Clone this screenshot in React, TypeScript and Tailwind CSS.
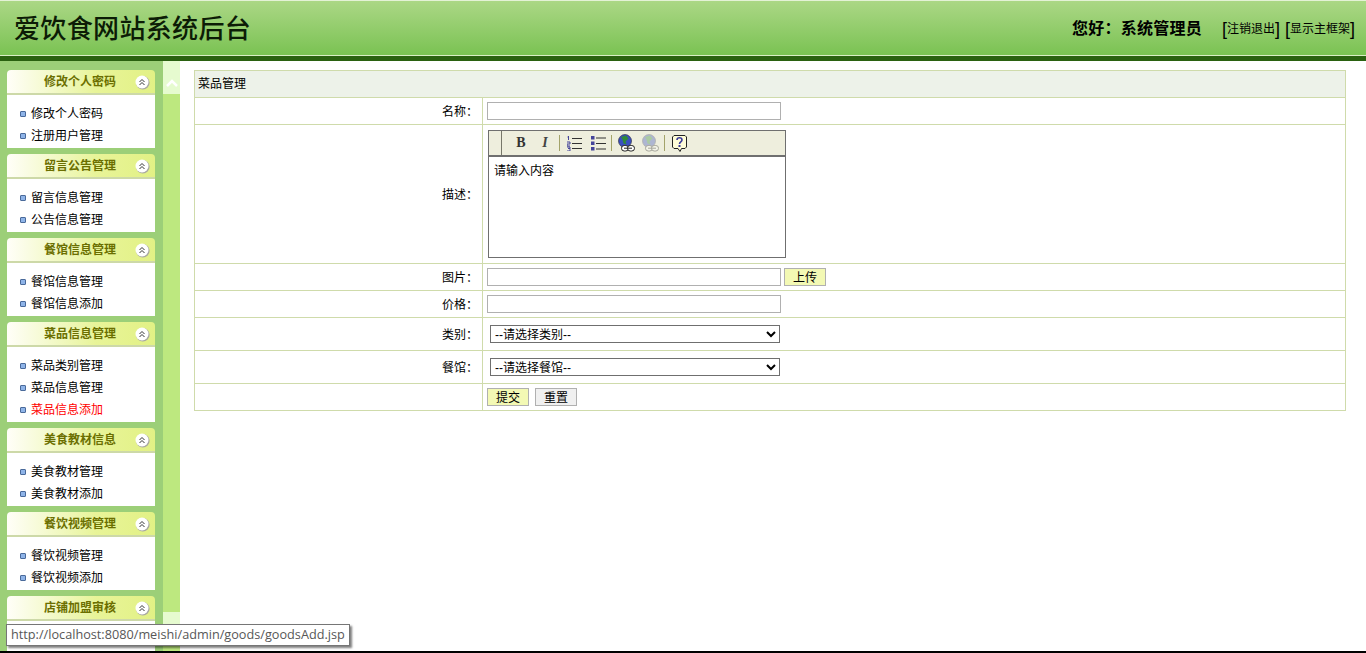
const cjk = "font-['Liberation_Sans','Noto_Sans_CJK_SC',sans-serif]";

const menus = [
  { title: "修改个人密码", items: ["修改个人密码", "注册用户管理"] },
  { title: "留言公告管理", items: ["留言信息管理", "公告信息管理"] },
  { title: "餐馆信息管理", items: ["餐馆信息管理", "餐馆信息添加"] },
  { title: "菜品信息管理", items: ["菜品类别管理", "菜品信息管理", "菜品信息添加"] },
  { title: "美食教材信息", items: ["美食教材管理", "美食教材添加"] },
  { title: "餐饮视频管理", items: ["餐饮视频管理", "餐饮视频添加"] },
  { title: "店铺加盟审核", items: [] },
];

function CollapseIcon() {
  return (
    <svg width="15" height="15" viewBox="0 0 15 15" className="mt-[1px] mr-[5px] shrink-0">
      <circle cx="7.8" cy="7.8" r="6.8" fill="#a8a8a0" />
      <circle cx="7" cy="7" r="6.5" fill="#ffffff" />
      <path d="M4.5 7 7 4.5 9.5 7M4.5 10 7 7.5 9.5 10" fill="none" stroke="#333" strokeWidth="1" />
    </svg>
  );
}

function MenuGroup({ title, items }: { title: string; items: string[] }) {
  return (
    <div className="mb-[6px] w-[148px] shrink-0">
      <div className="flex h-[25px] items-center rounded-t-[4px] border-b-2 border-[#cdd9a8] bg-gradient-to-r from-[#fffef8] via-[#e8f498] via-60% to-[#e2f185]">
        <span className="flex-1 pl-[37px] text-[12px] font-bold text-[#6b6f00]">{title}</span>
        <CollapseIcon />
      </div>
      <ul className="min-h-[53px] bg-white pt-[8px] pb-[1px]">
        {items.map((item) => (
          <li key={item} className="flex h-[22px] items-center pl-[13px]">
            <span className="mr-[5px] h-[6px] w-[6px] rounded-[1px] border border-[#4a6a9a] bg-[#8fb4e8]" />
            <span className={item === "菜品信息添加" ? "text-[#ff0000]" : "text-black"}>{item}</span>
          </li>
        ))}
      </ul>
    </div>
  );
}

function ToolBtn({ children }: { children: React.ReactNode }) {
  return <span className="flex h-full w-[24px] items-center justify-center">{children}</span>;
}

function Sep({ className }: { className: string }) {
  return <span className={`h-[16px] w-px bg-[#a3a36a] ${className}`} />;
}

function LinkGlobe() {
  return (
    <svg width="17" height="18" viewBox="0 0 17 18">
      <circle cx="7" cy="7" r="6.5" fill="#3a4fc0" stroke="#223" strokeWidth="0.6" />
      <path d="M3 3 8 1.5l2.5 3-3 3 1 3-3-1-1-4z" fill="#2f8a3a" />
      <rect x="3.5" y="11.5" width="7" height="5.5" rx="2.7" fill="#fff" stroke="#222" />
      <rect x="9.5" y="11.5" width="7" height="5.5" rx="2.7" fill="#fff" stroke="#222" />
      <path d="M6 14.2h8" stroke="#222" />
    </svg>
  );
}

function Toolbar() {
  return (
    <div className="flex h-[26px] items-center border-b-2 border-[#6f6f6f] bg-[#eeeedd]">
      <span className="mr-[7px] h-full w-[13px] border-r border-[#77776a]" />
      <ToolBtn>
        <span className="font-['Liberation_Serif',serif] text-[14px] leading-none font-bold text-[#333]">B</span>
      </ToolBtn>
      <ToolBtn>
        <span className="font-['Liberation_Serif',serif] text-[14px] leading-none font-bold text-[#444] italic">I</span>
      </ToolBtn>
      <Sep className="mr-[2px] ml-[2px]" />
      <ToolBtn>
        <svg width="15" height="15" viewBox="0 0 15 15">
          <path d="M1.5 0v4M.5 1h1M0 6h3v2H0v2h3M0 11h3v1.5H1M3 12.500V15H0" fill="none" stroke="#44449a" />
          <path d="M5 2.500h10M5 7.500h10M5 12.500h10" stroke="#333" />
        </svg>
      </ToolBtn>
      <ToolBtn>
        <svg width="15" height="15" viewBox="0 0 15 15">
          <path d="M0 0h3.500v3.500H0zM0 5.500h3.500V9H0zM0 11h3.500v3.500H0z" fill="#44449a" />
          <path d="M5 2h10M5 7.500h10M5 13h10" stroke="#333" />
        </svg>
      </ToolBtn>
      <Sep className="mr-[2px] ml-[1px]" />
      <ToolBtn>
        <LinkGlobe />
      </ToolBtn>
      <ToolBtn>
        <span className="flex opacity-35">
          <LinkGlobe />
        </span>
      </ToolBtn>
      <Sep className="mr-[2px] ml-[2px]" />
      <ToolBtn>
        <svg width="15" height="17" viewBox="0 0 15 17">
          <path d="M2 .5h11l1.500 1.500v10L13 13.500H9.500L8 16.500l-2-3H2L.5 12V2z" fill="#fffdd8" stroke="#222" />
          <path d="M5 5c0-3 5-3 5 0 0 2-2.500 1.800-2.500 4" fill="none" stroke="#3a3a9a" strokeWidth="1.600" />
          <path d="M6.500 10h2v2h-2z" fill="#3a3a9a" />
        </svg>
      </ToolBtn>
    </div>
  );
}

const inputCls = "block h-[18px] w-[294px] border border-[#b0b0b0] bg-white";
const tdLabel = "border border-[#cfdbab] pt-[1px] pr-[4px] text-right align-middle";
const tdValue = "border border-[#cfdbab] pl-[4px] align-middle";

function FormRow({ label, h, children }: { label: string; h: string; children: React.ReactNode }) {
  return (
    <tr className={h}>
      <td className={tdLabel}>{label}：</td>
      <td className={tdValue}>{children}</td>
    </tr>
  );
}

export default function App() {
  return (
    <div className={`relative flex h-[653px] flex-col overflow-hidden bg-white text-[12px] text-black ${cjk}`}>
      <header className="flex h-[61px] shrink-0 items-center justify-between border-t border-b-[5px] border-t-[#e4f2d6] border-b-[#2a6110] bg-gradient-to-b from-[#abd785] to-[#79c251] shadow-[inset_0_-1px_0_#d8eec4]">
        <h1 className="pl-[14px] text-[26px] leading-none font-medium tracking-[0.35px] text-[#0c1c06]">爱饮食网站系统后台</h1>
        <div className="flex items-center pr-[11px]">
          <span className="mr-[20px] text-[16px] font-bold tracking-[0.25px]">您好：系统管理员</span>
          <span className="flex items-center gap-[5px]">
            <span className="flex items-center"><span className="text-[18px] leading-none">[</span>注销退出<span className="text-[18px] leading-none">]</span></span>
            <span className="flex items-center"><span className="text-[18px] leading-none">[</span>显示主框架<span className="text-[18px] leading-none">]</span></span>
          </span>
        </div>
      </header>

      <div className="flex min-h-0 flex-1">
        <aside className="flex w-[163px] shrink-0 flex-col overflow-hidden bg-[#9ccf78] pt-[9px] pl-[7px]">
          {menus.map((m) => (
            <MenuGroup key={m.title} title={m.title} items={m.items} />
          ))}
        </aside>
        <div className="flex w-[17px] shrink-0 flex-col justify-between bg-[#bde87f]">
          <div className="flex h-[33px] items-center justify-center bg-[#e6fbcf] pt-[10px]">
            <svg width="12" height="8" viewBox="0 0 12 8"><path d="M1 7 6 2l5 5" fill="none" stroke="#fff" strokeWidth="2.500" /></svg>
          </div>
          <div className="mb-[19px] h-[20px] bg-[#e6fbcf]" />
        </div>
        <main className="flex-1 pt-[9px] pr-[20px] pl-[14px]">
          <table className="w-[1152px] table-fixed border-collapse">
            <colgroup>
              <col className="w-[288px]" />
              <col />
            </colgroup>
            <tbody>
              <tr className="h-[27px]">
                <td colSpan={2} className="border border-[#cfdbab] bg-[#edf2e9] pl-[3px]">菜品管理</td>
              </tr>
              <FormRow label="名称" h="h-[27px]"><input className={inputCls} /></FormRow>
              <FormRow label="描述" h="h-[139px]">
                <div className="ml-[1px] w-[298px] border border-[#6f6f6f]">
                  <Toolbar />
                  <div className="h-[100px] bg-white pt-[5px] pl-[5px]">请输入内容</div>
                </div>
              </FormRow>
              <FormRow label="图片" h="h-[27px]">
                <div className="flex items-center gap-[3px]">
                  <input className={inputCls} />
                  <button className="h-[18px] w-[42px] border border-[#b0b0b0] bg-[#f3f9b4]">上传</button>
                </div>
              </FormRow>
              <FormRow label="价格" h="h-[27px]"><input className={inputCls} /></FormRow>
              <FormRow label="类别" h="h-[33px]">
                <select className="ml-[3px] block h-[18px] w-[290px] border border-[#6f6f6f] bg-white pt-[1px]">
                  <option>--请选择类别--</option>
                </select>
              </FormRow>
              <FormRow label="餐馆" h="h-[33px]">
                <select className="ml-[3px] block h-[18px] w-[290px] border border-[#6f6f6f] bg-white pt-[1px]">
                  <option>--请选择餐馆--</option>
                </select>
              </FormRow>
              <tr className="h-[27px]">
                <td className={tdLabel} />
                <td className={tdValue}>
                  <div className="flex gap-[6px]">
                    <button className="h-[18px] w-[42px] border border-[#b0b0b0] bg-[#f3f9b4]">提交</button>
                    <button className="h-[18px] w-[42px] border border-[#b0b0b0] bg-[#f0f0f0]">重置</button>
                  </div>
                </td>
              </tr>
            </tbody>
          </table>
        </main>
      </div>

      <div className="h-[2px] shrink-0 bg-black" />

      <div className="absolute top-[624px] left-[6px] flex h-[22px] w-[344px] items-center border border-[#767676] bg-white pl-[4px] font-['Open_Sans',sans-serif] text-[12.7px] text-[#575757] shadow-[2px_2px_2px_rgba(0,0,0,0.5)]">
        http://localhost:8080/meishi/admin/goods/goodsAdd.jsp
      </div>
    </div>
  );
}
